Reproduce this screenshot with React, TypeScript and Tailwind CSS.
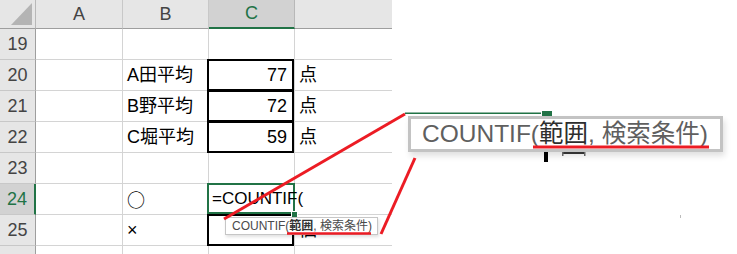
import React from 'react'

const FONT = "font-['Liberation_Sans','Noto_Sans_CJK_JP',sans-serif]"

const colHeads = [
  { key: 'A', active: false },
  { key: 'B', active: false },
  { key: 'C', active: true },
  { key: 'D', active: false },
]

const rows = [
  { n: 19, b: '', c: '', d: '', box: false },
  { n: 20, b: 'A田平均', c: '77', d: '点', box: true },
  { n: 21, b: 'B野平均', c: '72', d: '点', box: true },
  { n: 22, b: 'C堀平均', c: '59', d: '点', box: true },
  { n: 23, b: '', c: '', d: '', box: false },
  { n: 24, b: '○', c: '', d: '', box: false, active: true },
  { n: 25, b: '×', c: '', d: '個', box: true },
  { n: 26, b: '', c: '', d: '', box: false },
]

function ThickBox() {
  return <div className="absolute -left-[2px] -top-[1px] right-0 -bottom-[1px] border-2 border-black" />
}

function Sheet() {
  return (
    <div className="grid grid-cols-[36px_87px_86px_86px_97px] grid-rows-[29px_repeat(8,31px)] text-[18px] text-black">
      {/* select all corner */}
      <div className="bg-[#e6e6e6] border-r border-b border-r-[#b8b8b8] border-b-[#9e9e9e] flex items-end justify-end pr-[3px] pb-[3px]">
        <svg width="21" height="22" viewBox="0 0 21 22">
          <polygon points="21,0 21,22 0,22" fill="#b4b4b4" />
        </svg>
      </div>
      {colHeads.map((h) =>
        h.active ? (
          <div key={h.key} className="bg-[#d2d2d2] text-[#217346] border-r border-r-[#b8b8b8] border-b-2 border-b-[#217346] flex items-center justify-center">
            {h.key}
          </div>
        ) : (
          <div
            key={h.key}
            className={
              'bg-[#e6e6e6] text-[#444] border-b border-b-[#9e9e9e] flex items-center justify-center ' +
              (h.key === 'D' ? '' : 'border-r border-r-[#c8c8c8]')
            }
          >
            {h.key === 'D' ? '' : h.key}
          </div>
        )
      )}

      {rows.map((r) => (
        <React.Fragment key={r.n}>
          {r.active ? (
            <div className="bg-[#d2d2d2] text-[#217346] border-r-2 border-r-[#217346] border-b border-b-[#c8c8c8] flex items-center justify-center">
              {r.n}
            </div>
          ) : (
            <div className="bg-[#e6e6e6] text-[#444] border-r border-r-[#9e9e9e] border-b border-b-[#c8c8c8] flex items-center justify-center">
              {r.n === 26 ? '' : r.n}
            </div>
          )}
          <div className="border-r border-b border-[#d4d4d4]" />
          <div className="border-r border-b border-[#d4d4d4] flex items-center pl-[4px]">
            {r.b === '○' ? <span className="font-['Noto_Sans_CJK_JP',sans-serif]">{r.b}</span> : r.b}
          </div>
          <div className="relative border-r border-b border-[#d4d4d4] flex items-center justify-end pr-[7px]">
            {r.c}
            {r.box && <ThickBox />}
            {r.active && (
              <>
                <div className="absolute -left-[2px] -top-[1px] -right-[1px] bottom-0 border-2 border-[#217346]" />
                <div className="absolute -right-[4px] -bottom-[4px] w-[7px] h-[7px] bg-[#217346] border border-white z-10" />
                <span className="absolute left-[3px] top-0 bottom-0 flex items-center whitespace-nowrap z-10 text-[17px]">
                  =COUNTIF(
                </span>
              </>
            )}
          </div>
          <div className="border-b border-[#d4d4d4] flex items-center pl-[4px]">{r.d}</div>
        </React.Fragment>
      ))}
    </div>
  )
}

export default function App() {
  return (
    <div className={`relative w-[737px] h-[254px] overflow-hidden bg-white ${FONT}`}>
      <Sheet />

      {/* small function tooltip */}
      <div className="absolute left-[225px] top-[217px] h-[18px] pl-[6px] pr-[5px] flex items-center bg-white border border-[#c6c6c6] shadow-[1px_2px_3px_rgba(0,0,0,0.12)] text-[12px] text-[#4a4a4a] whitespace-nowrap z-20">
        COUNTIF(<b className="font-bold text-[#333]">範囲</b>, 検索条件)
      </div>

      {/* enlarged callout */}
      <div className="absolute left-[408px] top-[116px] w-[315px] h-[36px] pl-[11px] flex items-center bg-white border-[3px] border-[#c3c3c3] shadow-[2px_4px_6px_rgba(0,0,0,0.12)] text-[24.5px] text-[#5f5f5f] whitespace-nowrap z-20">
        COUNTIF(<span className="text-[#2e2e2e]">範囲</span>, 検索条件)
      </div>

      <svg className="absolute inset-0 pointer-events-none z-30" width="737" height="254" viewBox="0 0 737 254">
        {/* magnified bits around the callout */}
        <rect x="405" y="112.5" width="136" height="1.5" fill="#217346" />
        <rect x="542" y="111" width="10" height="5" fill="#217346" />
        <rect x="544" y="152" width="4" height="10" fill="#000" />
        <rect x="562" y="152" width="23" height="2" fill="#333" />
        <rect x="562" y="152" width="1.5" height="4" fill="#666" />
        <rect x="584" y="152" width="1.5" height="4" fill="#666" />
        <rect x="680" y="215" width="1" height="3" fill="#bbb" />

        {/* red annotations */}
        <line x1="224" y1="219" x2="405" y2="114" stroke="#ec1c24" strokeWidth="3" />
        <line x1="381" y1="234" x2="415" y2="158" stroke="#ec1c24" strokeWidth="3" />
        <line x1="287" y1="233.5" x2="371" y2="233.5" stroke="#ec1c24" strokeWidth="2.5" />
        <line x1="533" y1="147" x2="709" y2="147" stroke="#ec1c24" strokeWidth="3" />
      </svg>
    </div>
  )
}
